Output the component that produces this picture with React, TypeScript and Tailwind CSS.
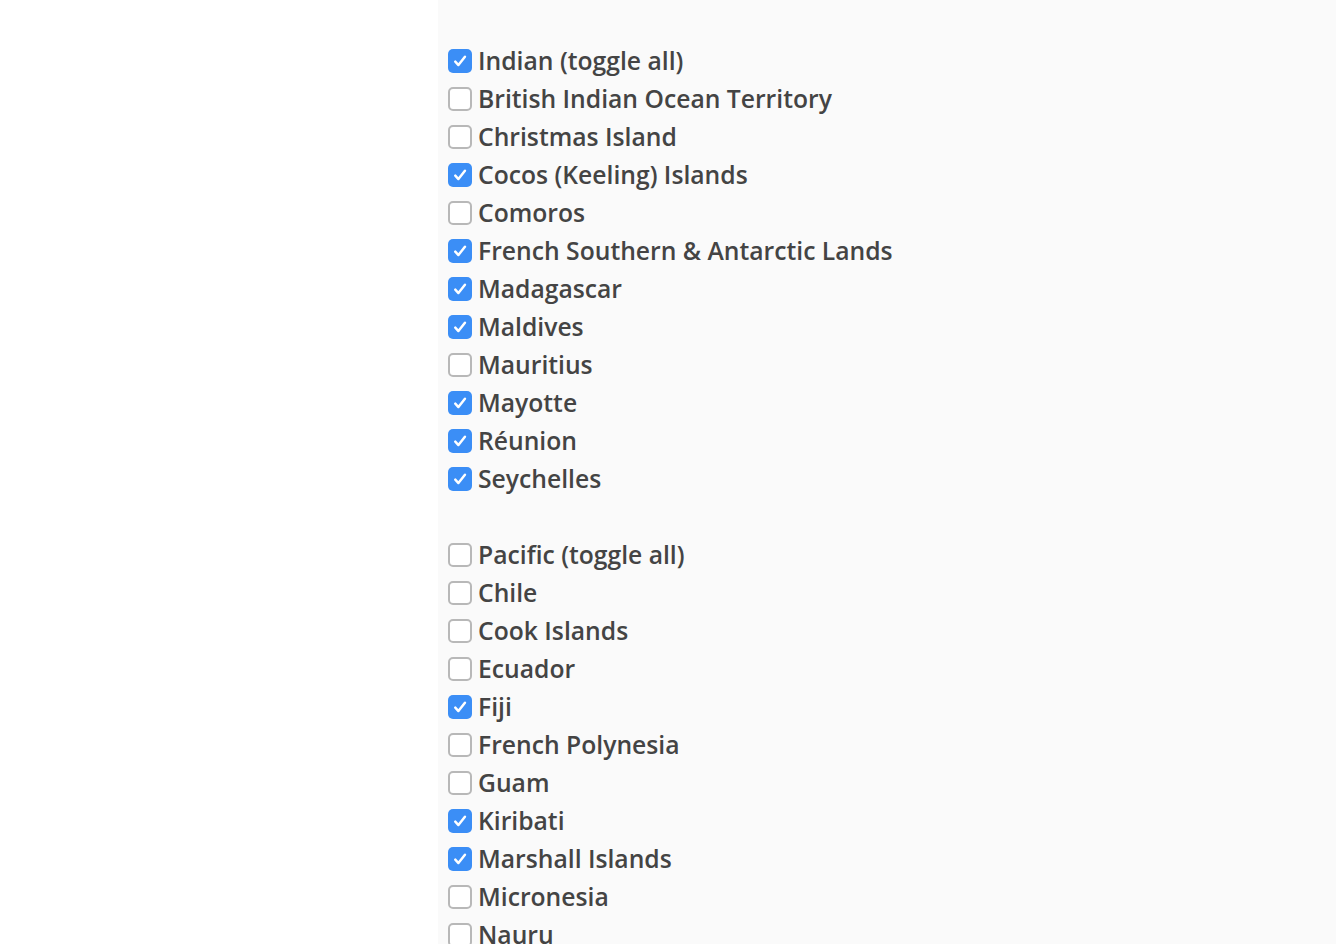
import * as React from "react"

interface Group {
  name: string
  items: { label: string; checked: boolean }[]
}

const GROUPS: Group[] = [
  {
    name: "Indian",
    items: [
      { label: "Indian (toggle all)", checked: true },
      { label: "British Indian Ocean Territory", checked: false },
      { label: "Christmas Island", checked: false },
      { label: "Cocos (Keeling) Islands", checked: true },
      { label: "Comoros", checked: false },
      { label: "French Southern & Antarctic Lands", checked: true },
      { label: "Madagascar", checked: true },
      { label: "Maldives", checked: true },
      { label: "Mauritius", checked: false },
      { label: "Mayotte", checked: true },
      { label: "Réunion", checked: true },
      { label: "Seychelles", checked: true },
    ],
  },
  {
    name: "Pacific",
    items: [
      { label: "Pacific (toggle all)", checked: false },
      { label: "Chile", checked: false },
      { label: "Cook Islands", checked: false },
      { label: "Ecuador", checked: false },
      { label: "Fiji", checked: true },
      { label: "French Polynesia", checked: false },
      { label: "Guam", checked: false },
      { label: "Kiribati", checked: true },
      { label: "Marshall Islands", checked: true },
      { label: "Micronesia", checked: false },
      { label: "Nauru", checked: false },
    ],
  },
]

const Box = ({ checked }: { checked: boolean }) =>
  checked ? (
    <span className="w-6 h-6 shrink-0 rounded-[5px] bg-[#3b8ef6] flex items-center justify-center">
      <svg width="18" height="18" viewBox="0 0 16 16" fill="none">
        <path d="M3.8 8.6 L6.6 11.6 L12.4 4.2" stroke="white" strokeWidth="2.2" strokeLinecap="round" strokeLinejoin="round" />
      </svg>
    </span>
  ) : (
    <span className="w-6 h-6 shrink-0 rounded-[5px] bg-white border-2 border-[#b8b8b8]" />
  )

export default function App() {
  const [groups, setGroups] = React.useState(GROUPS)

  const toggle = (g: number, i: number) => {
    setGroups((prev) =>
      prev.map((grp, gi) =>
        gi !== g
          ? grp
          : {
              ...grp,
              items: grp.items.map((it, ii) => {
                if (i === 0) return { ...it, checked: !grp.items[0].checked }
                return ii === i ? { ...it, checked: !it.checked } : it
              }),
            }
      )
    )
  }

  return (
    <div className="flex h-[944px] overflow-hidden bg-white font-['Open_Sans',sans-serif]">
      <div className="w-[438px] shrink-0 bg-white" />
      <div className="flex-1 bg-[#fafafa] pt-[42px] pl-[10px] flex flex-col gap-[38px]">
        {groups.map((grp, g) => (
          <div key={grp.name} className="flex flex-col">
            {grp.items.map((it, i) => (
              <label
                key={it.label}
                onClick={() => toggle(g, i)}
                className="h-[38px] flex items-center gap-[6px] cursor-pointer"
              >
                <Box checked={it.checked} />
                <span className="text-[24.7px] font-semibold text-[#444] whitespace-nowrap">
                  {it.label}
                </span>
              </label>
            ))}
          </div>
        ))}
      </div>
    </div>
  )
}
